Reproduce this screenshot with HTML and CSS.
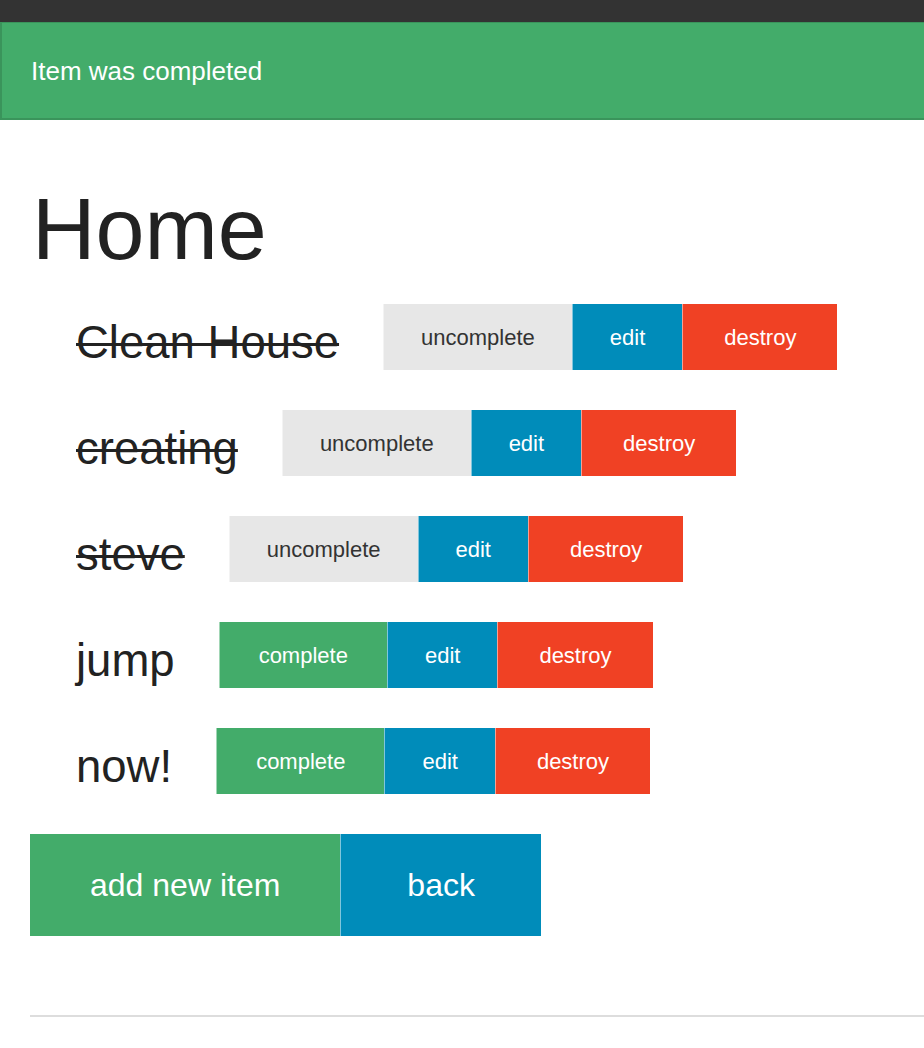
FILE: index.html
```html
<!DOCTYPE html>
<html>
<head>
<meta charset="utf-8">
<link rel="stylesheet" href="styles.css">
</head>
<body>
<div class="topbar"></div>
<div class="alert">Item was completed</div>
<main class="content">
  <h1 class="title">Home</h1>
  <ul class="items">
    <li class="item">
      <span class="item-name done">Clean House</span>
      <div class="btn-group">
        <a class="btn btn-grey">uncomplete</a><a class="btn btn-blue">edit</a><a class="btn btn-red">destroy</a>
      </div>
    </li>
    <li class="item">
      <span class="item-name done">creating</span>
      <div class="btn-group">
        <a class="btn btn-grey">uncomplete</a><a class="btn btn-blue">edit</a><a class="btn btn-red">destroy</a>
      </div>
    </li>
    <li class="item">
      <span class="item-name done">steve</span>
      <div class="btn-group">
        <a class="btn btn-grey">uncomplete</a><a class="btn btn-blue">edit</a><a class="btn btn-red">destroy</a>
      </div>
    </li>
    <li class="item">
      <span class="item-name">jump</span>
      <div class="btn-group">
        <a class="btn btn-green">complete</a><a class="btn btn-blue">edit</a><a class="btn btn-red">destroy</a>
      </div>
    </li>
    <li class="item">
      <span class="item-name">now!</span>
      <div class="btn-group">
        <a class="btn btn-green">complete</a><a class="btn btn-blue">edit</a><a class="btn btn-red">destroy</a>
      </div>
    </li>
  </ul>
  <div class="actions">
    <a class="big-btn btn-green">add new item</a><a class="big-btn btn-blue">back</a>
  </div>
  <hr class="rule">
</main>
</body>
</html>
```

FILE: styles.css
```css
html, body {
  margin: 0;
  padding: 0;
  background: #fff;
  font-family: "Liberation Sans", Arial, Helvetica, sans-serif;
  color: #222;
}

.topbar {
  height: 22px;
  background: #333;
}

.alert {
  box-sizing: border-box;
  height: 98px;
  display: flex;
  align-items: center;
  padding-left: 29px;
  background: #43ac6a;
  border: 2px solid #3a945b;
  border-top-width: 1px;
  border-right: none;
  color: #fff;
  font-size: 26px;
  line-height: 30px;
}

.content {
  padding-left: 30px;
}

.title {
  margin: 65px 0 0 2px;
  font-size: 88px;
  font-weight: normal;
  line-height: 88px;
  color: #222;
}

.items {
  list-style: none;
  margin: 31px 0 0 0;
  padding: 0 0 0 46px;
}

.item {
  display: flex;
  align-items: flex-start;
  gap: 44px;
  margin-bottom: 40px;
}

.item-name {
  font-size: 45.5px;
  line-height: 53px;
  margin-top: 12px;
  color: #222;
  white-space: nowrap;
}

.done {
  text-decoration: line-through;
  text-decoration-thickness: 3px;
}

.btn-group {
  display: flex;
}

.btn {
  box-sizing: border-box;
  height: 66px;
  display: flex;
  align-items: center;
  justify-content: center;
  padding: 0 38px;
  font-size: 22px;
  line-height: 25px;
  color: #fff;
  border-left: 1px solid rgba(255, 255, 255, 0.5);
  text-decoration: none;
}

.btn-grey {
  background: #e7e7e7;
  color: #333;
  padding: 0 37px;
}

.btn-blue {
  background: #008cba;
  padding: 0 37px;
}

.btn-red {
  background: #f04124;
  padding: 0 41px;
}

.btn-green {
  background: #43ac6a;
  padding: 0 39px;
}

.actions {
  display: flex;
}

.big-btn {
  box-sizing: border-box;
  height: 102px;
  display: flex;
  align-items: center;
  justify-content: center;
  padding: 0 60px;
  font-size: 32px;
  color: #fff;
  text-decoration: none;
}

.big-btn + .big-btn {
  border-left: 1px solid rgba(255, 255, 255, 0.5);
  padding: 0 66px;
}

.rule {
  margin: 79px 0 0 0;
  border: 0;
  height: 2px;
  background: #ddd;
}
```
